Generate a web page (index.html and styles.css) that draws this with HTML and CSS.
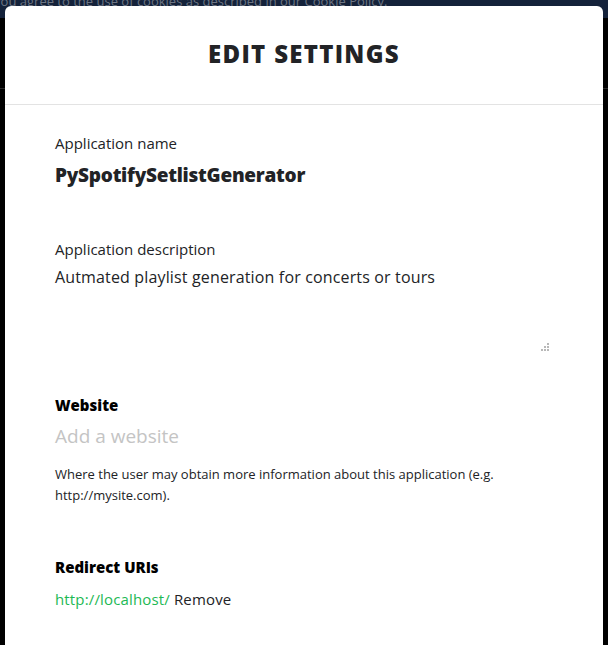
FILE: index.html
```html
<!DOCTYPE html>
<html>
<head>
<meta charset="utf-8">
<link rel="stylesheet" href="styles.css">
</head>
<body>
<div class="page">
  <div class="cookie-bar"><p class="cookie-text">By using our website, you agree to the use of cookies as described in our <u>Cookie Policy</u>.</p></div>
  <div class="page-header"></div>
</div>
<div class="modal">
  <div class="modal-header"><h1 class="modal-title">EDIT SETTINGS</h1></div>
  <div class="modal-body">
    <div class="field field-name">
      <div class="label">Application name</div>
      <div class="app-name">PySpotifySetlistGenerator</div>
    </div>
    <div class="field field-desc">
      <div class="label">Application description</div>
      <div class="desc">Autmated playlist generation for concerts or tours</div>
      <div class="grip-row">
        <svg class="grip" width="9" height="9" viewBox="0 0 9 9"><g fill="#b8b8b8"><rect x="6" y="0" width="2" height="2"/><rect x="3" y="3" width="2" height="2"/><rect x="6" y="3" width="2" height="2"/><rect x="0" y="6" width="2" height="2"/><rect x="3" y="6" width="2" height="2"/><rect x="6" y="6" width="2" height="2"/></g></svg>
      </div>
    </div>
    <div class="field field-web">
      <div class="label-bold">Website</div>
      <div class="placeholder">Add a website</div>
      <p class="help">Where the user may obtain more information about this application (e.g. http://mysite.com).</p>
    </div>
    <div class="field field-redirect">
      <div class="label-bold">Redirect URIs</div>
      <div class="uri-row"><span class="uri">http://localhost/</span> <span class="remove">Remove</span></div>
    </div>
  </div>
</div>
</body>
</html>
```
FILE: styles.css
```css
html, body {
  margin: 0;
  padding: 0;
  height: 100%;
  overflow: hidden;
}
body {
  background: #000;
  font-family: "Open Sans", "Liberation Sans", sans-serif;
  color: #222326;
}
.page {
  display: flex;
  flex-direction: column;
}
.cookie-bar {
  height: 18px;
  background: #14223a;
  overflow: hidden;
  position: relative;
}
.cookie-text {
  margin: 0;
  margin-top: -9px;
  margin-left: -138px;
  font-size: 13px;
  line-height: 20px;
  color: #6d7583;
  white-space: nowrap;
}
.page-header {
  height: 70px;
  border-bottom: 1px solid #2a2a2a;
}
.modal {
  position: absolute;
  left: 5px;
  top: 6px;
  width: 598px;
  height: 700px;
  background: #fff;
  border-radius: 6px 6px 0 0;
}
.modal-header {
  height: 98px;
  border-bottom: 1px solid #e3e3e3;
  display: flex;
  align-items: center;
  justify-content: center;
}
.modal-title {
  margin: 0;
  font-size: 24px;
  font-weight: 800;
  letter-spacing: 1.3px;
  color: #222326;
  padding-bottom: 4px;
}
.modal-body {
  padding: 28px 50px 0 50px;
}
.label {
  font-size: 15px;
  line-height: 20px;
}
.app-name {
  font-size: 19px;
  font-weight: 800;
  letter-spacing: -0.25px;
  line-height: 24px;
  margin-top: 10px;
}
.field-desc {
  margin-top: 52px;
}
.desc {
  font-size: 16px;
  letter-spacing: 0.15px;
  line-height: 20px;
  margin-top: 8px;
}
.grip-row {
  display: flex;
  justify-content: flex-end;
  padding-right: 3px;
  margin-top: 56px;
}
.field-web {
  margin-top: 43px;
}
.label-bold {
  font-size: 15px;
  font-weight: 800;
  line-height: 20px;
  color: #000;
}
.placeholder {
  font-size: 19px;
  line-height: 24px;
  color: #c4c4c4;
  margin-top: 9px;
}
.help {
  font-size: 13px;
  line-height: 21px;
  margin: 16px 0 0 0;
  max-width: 450px;
}
.field-redirect {
  margin-top: 51px;
}
.uri-row {
  font-size: 15px;
  letter-spacing: 0.15px;
  line-height: 20px;
  margin-top: 12px;
}
.uri {
  color: #1db954;
}
.remove {
  color: #222326;
}
```
